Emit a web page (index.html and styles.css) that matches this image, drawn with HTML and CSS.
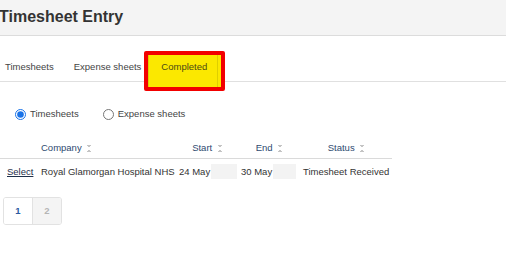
FILE: index.html
```html
<!DOCTYPE html>
<html lang="en">
<head>
    <meta charset="UTF-8">
    <meta name="viewport" content="width=device-width, initial-scale=1.0">
    <title>Timesheet Entry</title>
    <link rel="stylesheet" href="styles.css">
</head>
<body>
    <!-- Page title -->
    <div class="page-header">
        <h1>Timesheet Entry</h1>
    </div>

    <!-- Tabs -->
    <div class="tabs">
        <a class="tab">Timesheets</a>
        <a class="tab">Expense sheets</a>
        <a class="tab tab-active">Completed</a>
    </div>

    <!-- Filter -->
    <div class="filter">
        <label class="option"><input type="radio" name="kind" checked> Timesheets</label>
        <label class="option"><input type="radio" name="kind"> Expense sheets</label>
    </div>

    <table class="results">
        <colgroup>
            <col style="width:38px">
            <col style="width:138px">
            <col style="width:62px">
            <col style="width:62px">
            <col style="width:92px">
        </colgroup>
        <thead>
            <tr>
                <th></th>
                <th class="left">Company <span class="sort"></span></th>
                <th>Start <span class="sort"></span></th>
                <th>End <span class="sort"></span></th>
                <th>Status <span class="sort"></span></th>
            </tr>
        </thead>
        <tbody>
            <tr>
                <td class="select-cell"><a href="#">Select</a></td>
                <td>Royal Glamorgan Hospital NHS</td>
                <td>24 May<span class="redact"></span></td>
                <td>30 May<span class="redact short"></span></td>
                <td>Timesheet Received</td>
            </tr>
        </tbody>
    </table>

    <div class="pager">
        <span class="page current">1</span>
        <span class="page">2</span>
    </div>
</body>
</html>
```

FILE: styles.css
```css
body {
    margin: 0;
    font-family: "Liberation Sans", Arial, sans-serif;
    font-size: 9.5px;
    color: #333;
    background-color: white;
    overflow: hidden;
}

.page-header {
    height: 36px;
    box-sizing: border-box;
    background-color: #f4f4f4;
    border-bottom: 1px solid #dcdcdc;
}

.page-header h1 {
    margin: 0 0 0 -1px;
    padding-top: 6px;
    font-size: 16px;
    line-height: 21px;
    color: #333;
}

.tabs {
    display: flex;
    align-items: flex-end;
    height: 45px;
    margin-left: -5px;
    border-bottom: 1px solid #e0e0e0;
}

.tab {
    position: relative;
    z-index: 0;
    padding: 0 10px;
    height: 29px;
    line-height: 29px;
    color: #444;
    cursor: pointer;
}

.tab-active {
    color: #4b4815;
}

.tab-active::before {
    content: "";
    position: absolute;
    left: -7px;
    right: -8px;
    top: -1px;
    bottom: -10px;
    background-color: #fbe800;
    border: 4px solid #f20000;
    border-radius: 2px;
    z-index: -1;
}

.tab-active::after {
    content: "";
    position: absolute;
    left: -3px;
    right: -1px;
    top: 3px;
    bottom: -6px;
    border-left: 1px solid rgba(170, 160, 0, 0.35);
    border-right: 1px solid rgba(170, 160, 0, 0.35);
}

.filter {
    display: flex;
    padding: 24px 0 0 15px;
    line-height: 16px;
}

.option {
    display: flex;
    align-items: center;
    color: #444;
}

.option + .option {
    margin-left: 24px;
}

.option input {
    width: 11px;
    height: 11px;
    margin: 0 4px 0 0;
    accent-color: #1a73e8;
}

.results {
    margin-top: 14px;
    width: 392px;
    table-layout: fixed;
    border-collapse: collapse;
}

.results th {
    height: 22px;
    padding: 0 3px;
    font-weight: normal;
    color: #2e4a70;
    text-align: center;
    border-bottom: 1px solid #dadada;
    white-space: nowrap;
}

.results th.left {
    text-align: left;
}

.results td {
    height: 24px;
    padding: 0 3px;
    color: #333;
    white-space: nowrap;
}

.results td.select-cell {
    padding-left: 7px;
}

.results td a {
    color: #1e2f4a;
    text-decoration: underline;
}

.sort {
    display: inline-block;
    width: 4px;
    height: 7px;
    margin-left: 3px;
    vertical-align: -1px;
    background:
        linear-gradient(to top right, transparent 50%, #c4c4c4 50%) 0 0 / 2px 3px no-repeat,
        linear-gradient(to top left, transparent 50%, #c4c4c4 50%) 2px 0 / 2px 3px no-repeat,
        linear-gradient(to bottom right, transparent 50%, #c4c4c4 50%) 0 4px / 2px 3px no-repeat,
        linear-gradient(to bottom left, transparent 50%, #c4c4c4 50%) 2px 4px / 2px 3px no-repeat;
}

.redact {
    display: inline-block;
    width: 26px;
    height: 15px;
    margin-left: 1px;
    vertical-align: -4px;
    background-color: #f3f3f3;
}

.redact.short {
    width: 23px;
}

.pager {
    display: inline-flex;
    margin: 14px 0 0 3px;
    border: 1px solid #e2e2e2;
    border-radius: 3px;
    overflow: hidden;
}

.page {
    width: 28px;
    height: 26px;
    line-height: 26px;
    text-align: center;
    font-weight: bold;
    color: #b5b5b5;
    background-color: #f4f4f4;
}

.page.current {
    color: #2a5aa0;
    background-color: white;
    border-right: 1px solid #e2e2e2;
}
```
